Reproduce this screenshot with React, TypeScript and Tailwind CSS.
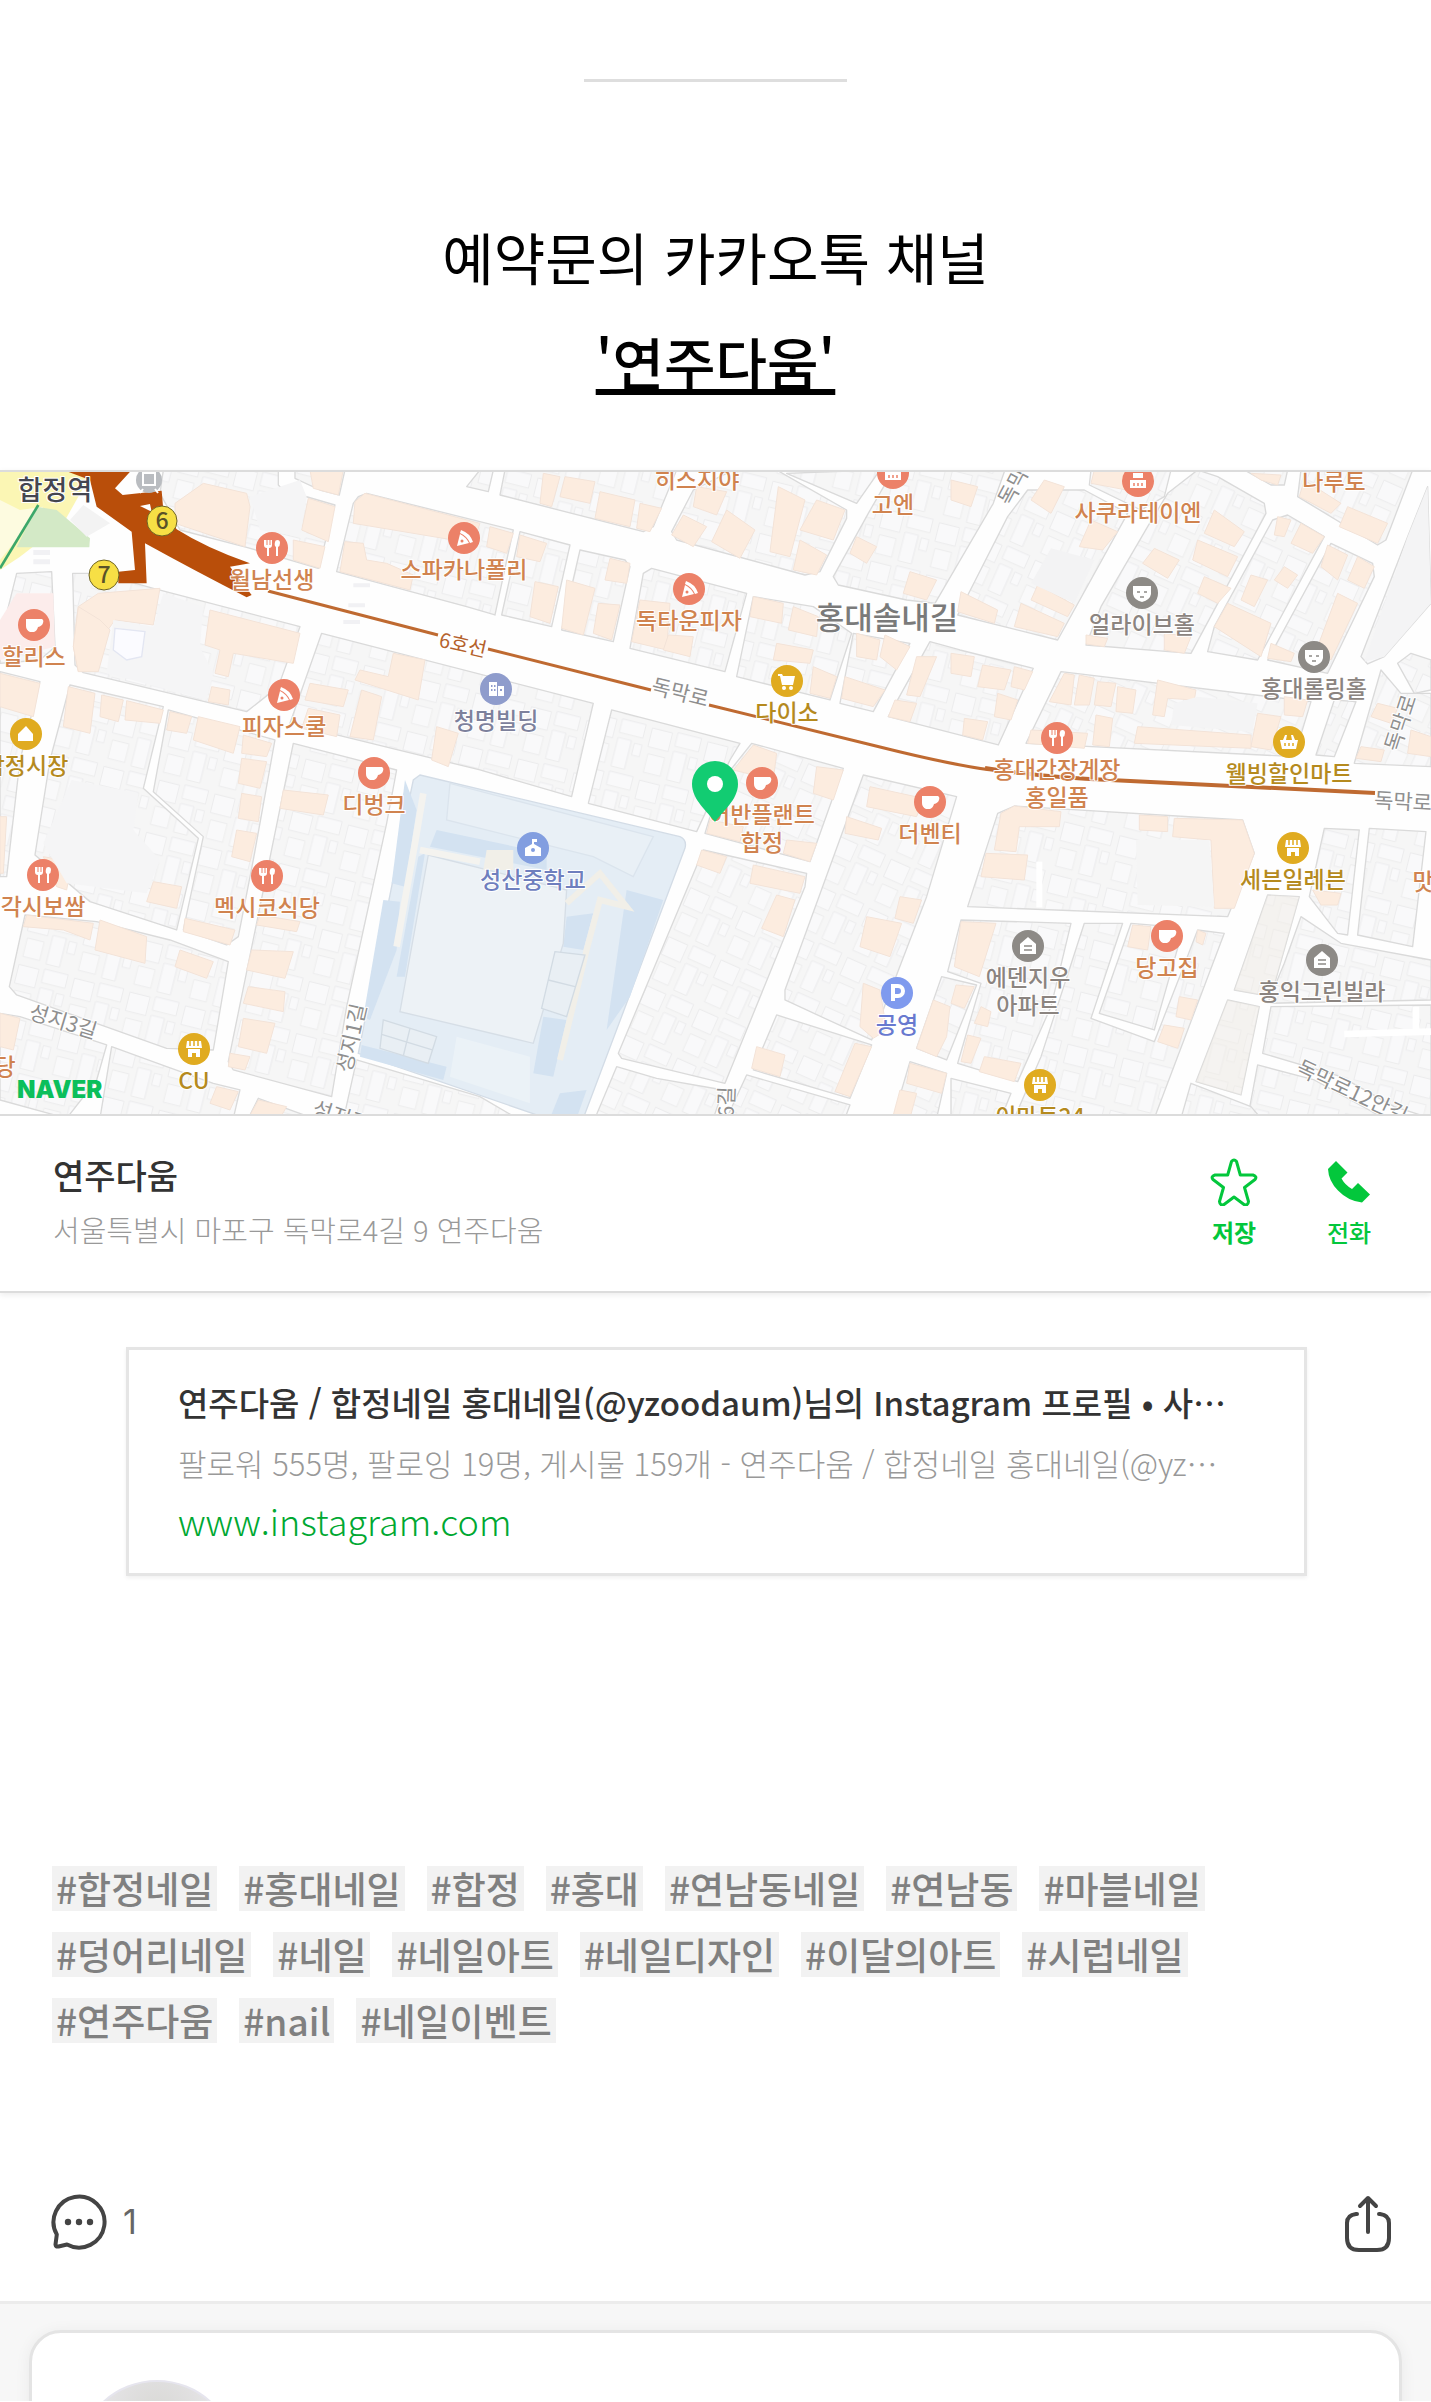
import React from 'react';

type IconKind =
  | 'fork' | 'pizza' | 'cup' | 'building' | 'cart' | 'face'
  | 'basket' | 'store' | 'school' | 'parking' | 'home' | 'tent' | 'bowl';

type Place = {
  x: number;
  y: number;
  lines: string[];
  color: string;
  icon?: IconKind;
  pin?: string;
};

const FOOD = '#d0834f';
const FOOD_PIN = '#ec8168';
const SHOP = '#b58a1e';
const SHOP_PIN = '#e0ab20';
const GRAY = '#8b8480';
const GRAY_PIN = '#8d8a86';

/* x / y is the centre of the round marker; the name sits below it. */
const PLACES: Place[] = [
  { x: 272, y: 548, lines: ['월남선생'], color: FOOD, icon: 'fork', pin: FOOD_PIN },
  { x: 464, y: 538, lines: ['스파카나폴리'], color: FOOD, icon: 'pizza', pin: FOOD_PIN },
  { x: 34, y: 625, lines: ['할리스'], color: FOOD, icon: 'cup', pin: FOOD_PIN },
  { x: 26, y: 734, lines: ['합정시장'], color: SHOP, icon: 'tent', pin: SHOP_PIN },
  { x: 284, y: 695, lines: ['피자스쿨'], color: FOOD, icon: 'pizza', pin: FOOD_PIN },
  { x: 496, y: 689, lines: ['청명빌딩'], color: '#7d819c', icon: 'building', pin: '#8f9ccc' },
  { x: 374, y: 773, lines: ['디벙크'], color: FOOD, icon: 'cup', pin: FOOD_PIN },
  { x: 689, y: 589, lines: ['독타운피자'], color: FOOD, icon: 'pizza', pin: FOOD_PIN },
  { x: 787, y: 681, lines: ['다이소'], color: SHOP, icon: 'cart', pin: SHOP_PIN },
  { x: 697, y: 448, lines: ['히스지야'], color: FOOD },
  { x: 893, y: 473, lines: ['고엔'], color: FOOD, icon: 'bowl', pin: FOOD_PIN },
  { x: 1138, y: 481, lines: ['사쿠라테이엔'], color: FOOD, icon: 'bowl', pin: FOOD_PIN },
  { x: 1334, y: 450, lines: ['나루토'], color: FOOD },
  { x: 1142, y: 593, lines: ['얼라이브홀'], color: GRAY, icon: 'face', pin: GRAY_PIN },
  { x: 1314, y: 657, lines: ['홍대롤링홀'], color: GRAY, icon: 'face', pin: GRAY_PIN },
  { x: 1057, y: 738, lines: ['홍대간장게장', '홍일품'], color: FOOD, icon: 'fork', pin: FOOD_PIN },
  { x: 1289, y: 742, lines: ['웰빙할인마트'], color: SHOP, icon: 'basket', pin: SHOP_PIN },
  { x: 762, y: 783, lines: ['어반플랜트', '합정'], color: FOOD, icon: 'cup', pin: FOOD_PIN },
  { x: 930, y: 802, lines: ['더벤티'], color: FOOD, icon: 'cup', pin: FOOD_PIN },
  { x: 1293, y: 848, lines: ['세븐일레븐'], color: SHOP, icon: 'store', pin: SHOP_PIN },
  { x: 533, y: 848, lines: ['성산중학교'], color: '#6f7fbe', icon: 'school', pin: '#829ee0' },
  { x: 43, y: 875, lines: ['각시보쌈'], color: FOOD, icon: 'fork', pin: FOOD_PIN },
  { x: 267, y: 876, lines: ['멕시코식당'], color: FOOD, icon: 'fork', pin: FOOD_PIN },
  { x: 897, y: 993, lines: ['공영'], color: '#6879cf', icon: 'parking', pin: '#7f9aee' },
  { x: 1167, y: 936, lines: ['당고집'], color: FOOD, icon: 'cup', pin: FOOD_PIN },
  { x: 1028, y: 946, lines: ['에덴지우', '아파트'], color: GRAY, icon: 'home', pin: GRAY_PIN },
  { x: 1322, y: 960, lines: ['홍익그린빌라'], color: GRAY, icon: 'home', pin: GRAY_PIN },
  { x: 194, y: 1049, lines: ['CU'], color: SHOP, icon: 'store', pin: SHOP_PIN },
  { x: 1040, y: 1085, lines: ['이마트24'], color: SHOP, icon: 'store', pin: SHOP_PIN },
  { x: 1423, y: 850, lines: ['맛'], color: FOOD },
  { x: 5, y: 1035, lines: ['당'], color: FOOD },
];

const ROAD_LABELS = [
  { x: 680, y: 693, r: 14, t: '독막로' },
  { x: 1401, y: 723, r: -72, t: '독막로' },
  { x: 1403, y: 802, r: 3, t: '독막로' },
  { x: 63, y: 1022, r: 17, t: '성지3길' },
  { x: 352, y: 1038, r: -77, t: '성지1길' },
  { x: 341, y: 1117, r: 18, t: '성지길' },
  { x: 727, y: 1102, r: -88, t: '6길' },
  { x: 1352, y: 1092, r: 25, t: '독막로12안길' },
  { x: 1018, y: 478, r: -62, t: '독막로' },
];

type Sheet = { ox: number; oy: number; blocks: string[]; peach: string[] };

/* City blocks and shop buildings, drawn tile by tile at three times map scale. */
const SHEETS: Sheet[] = [
  {
    ox: 0, oy: 460,
    blocks: [
      '480,100 490,30 835,30 835,75 850,90 1005,135 955,325 740,262 540,210',
      '885,30 1035,30 1018,105 960,90 885,55',
      '1060,130 1075,110 1100,100 1540,210 1485,465 1400,440 1010,335',
      '50,340 155,335 165,560 120,600 0,610 0,540',
      '218,340 300,340 460,385 900,500 835,680 740,755 250,638 225,615',
      '965,520 1780,730 1715,1010 1440,930 870,790',
      '0,635 120,665 60,900 20,1250 0,1250',
      '210,675 490,740 430,985 595,1135 530,1410 270,1325 105,1185 150,900',
      '505,750 825,840 760,1200 715,1430 680,1455 550,1410 610,1130 460,995',
    ],
    peach: [
      '525,130 610,70 740,100 750,140 735,260 525,190',
      '925,115 1005,140 985,245 905,210', '880,240 975,260 960,325 880,300',
      '930,30 1030,30 1015,105 940,85',
      '1065,125 1095,100 1440,190 1420,250 1060,190', '1035,245 1090,250 1100,300 1160,310 1240,345 1230,390 1020,335',
      '295,400 480,385 460,495 345,480 235,635 220,560 235,440', '235,440 300,480 330,510 295,635 235,635 220,560',
      '630,450 900,520 880,610 700,580 685,650 645,640 660,570 615,555', '635,680 690,690 685,735 625,725',
      '1180,580 1275,600 1255,720 1065,660 1080,630 1165,650', '1085,690 1145,710 1120,840 1050,830',
      '930,670 1045,690 1030,740 915,720', '925,745 1020,765 1010,830 905,805', '1310,800 1375,820 1345,920 1295,900',
      '0,640 120,670 100,770 0,740',
      '205,680 285,700 270,820 190,800', '305,705 370,720 355,785 300,770', '380,722 490,750 480,790 375,780',
      '510,755 575,770 560,820 500,810', '595,770 720,800 700,880 580,840', '730,825 815,850 800,890 725,880', '725,895 800,905 780,985 715,970',
    ],
  },
  {
    ox: 480, oy: 460,
    blocks: [
      '75,30 590,30 520,200 490,215 60,105',
      '0,30 40,30 25,95 -40,80',
      '640,90 760,30 890,30 1100,150 1100,175 1020,335 975,345 590,240 575,215',
      '1165,160 1240,30 1575,30 1540,130 1365,430 1280,420 1075,375 1060,350',
      '920,40 1200,30 1130,130',
      '515,325 800,400 735,635 450,565 490,340',
      '120,215 270,255 215,500 65,465',
      '300,270 435,300 450,320 400,545 245,510',
      '820,410 1000,440 1115,520 1050,720 770,650',
      '1120,520 1290,550 1180,755 1080,730',
      '1350,545 1440,570 1660,625 1555,855 1225,770',
      '395,750 780,850 750,900 650,1115 325,1030',
    ],
    peach: [
      '190,40 240,50 215,140 180,130', '255,50 345,65 330,130 240,110', '360,95 465,120 450,200 345,175', '480,130 545,145 510,215 470,205',
      '650,80 740,95 710,165 640,140', '610,165 680,200 640,260 575,225', '740,150 825,210 780,295 695,245',
      '895,80 975,120 930,290 870,275', '1010,120 1095,150 1060,240 960,210', '960,240 1040,285 1010,345 940,330',
      '1130,230 1190,260 1160,310 1110,280', '1290,335 1370,360 1340,420 1270,400', '30,200 100,220 80,280 20,260',
      '120,225 200,250 180,305 110,290', '165,365 235,380 210,490 150,470', '390,295 450,310 440,370 375,360', '260,360 345,385 310,525 245,505', '355,430 420,435 395,540 340,520',
      '480,420 570,430 560,570 455,545', '565,525 640,530 630,590 550,570', '820,410 910,430 905,490 810,470',
      '940,440 1015,470 1010,530 925,510', '890,550 1000,570 990,610 880,600', '1000,620 1070,650 1050,715 990,700',
      '1130,520 1200,540 1190,600 1130,590', '1215,525 1290,560 1250,630 1200,590', '1095,650 1215,690 1180,740 1085,715',
      '1310,590 1370,590 1320,710 1280,705', '1245,720 1310,730 1290,785 1225,770',
    ],
  },
  {
    ox: 951, oy: 460,
    blocks: [
      '230,90 400,90 530,160 320,540 20,465 170,170',
      '420,30 660,30 640,110 570,150 415,75',
      '590,200 650,100 740,30 800,50 940,130 945,160 720,580 405,555 450,440',
      '965,180 1010,165 1120,230 920,600 770,575 790,500',
      '1140,250 1265,310 1270,350 1130,640 950,600',
      '880,30 1010,30 1000,75 960,75',
      '1050,30 1385,30 1305,240 1280,255 1040,110',
      '1430,80 1440,430 1300,590 1250,612 1230,590 1370,230',
      '330,635 1080,725 1030,890 225,850',
      '1150,720 1215,725 1150,890 1095,885',
      '1290,630 1350,700 1440,700 1440,920 1210,910',
      '1340,610 1380,580 1440,600 1440,690 1390,700',
    ],
    peach: [
      '0,60 80,80 60,140 0,120', '280,60 340,80 300,160 240,120', '420,180 500,215 455,270 385,260', '260,375 370,435 350,470 240,420',
      '30,395 140,450 130,490 20,455', '210,430 340,490 320,530 190,500', '430,30 600,30 580,100 420,70',
      '790,150 880,215 850,260 760,220', '610,265 685,300 650,355 575,310', '740,240 860,290 830,350 725,300', '760,350 840,385 800,430 740,400',
      '980,170 1020,180 1000,230 970,225', '1050,190 1120,230 1085,280 1020,250', '1000,320 1040,345 1010,385 970,360',
      '900,345 950,360 910,440 870,420', '830,430 960,490 930,590 790,500', '1130,255 1190,285 1160,360 1110,320', '1220,290 1270,320 1240,385 1190,360',
      '1160,400 1220,430 1140,600 1100,560', '960,550 1030,580 1020,605 950,595', '1060,60 1170,130 1140,160 1045,110', '1190,140 1310,190 1280,250 1165,200',
      '0,580 70,590 60,650 0,640', '95,615 180,630 160,690 80,680', '190,620 245,635 220,690 180,680', '140,700 200,720 180,780 130,770',
      '340,640 370,645 360,735 295,725', '385,645 430,655 415,735 370,735', '440,665 495,670 480,740 430,735', '500,680 555,690 545,760 495,755',
      '620,660 735,690 730,720 650,715 640,770 605,765', '560,800 900,825 900,865 550,850', '920,760 990,770 960,870 900,860', '1000,710 1070,720 1055,770 1000,765',
      '240,810 410,820 400,865 230,850', '435,765 485,775 475,860 425,855', '1280,730 1340,745 1320,790 1260,770', '1230,860 1300,870 1290,905 1215,895', '1380,810 1440,830 1440,890 1370,880',
      '40,775 110,785 95,840 35,825', '405,525 470,535 460,560 405,552', '640,520 720,530 700,580 640,570', '900,40 990,45 980,75 930,60',
    ],
  },
  {
    ox: 0, oy: 790,
    blocks: [
      '880,-140 1190,-60 1160,100 1040,650 995,920 700,840 685,815',
      '75,375 290,395 510,450 685,515 640,780 500,775 50,615 28,590',
      '0,670 60,680 320,765 290,870 200,985 0,930',
      '335,770 500,830 640,880 720,900 700,985 300,985',
      '775,925 940,985 745,985',
      '1070,810 1440,920 1560,990 1030,990',
    ],
    peach: [
      '850,0 985,15 970,75 840,55', '725,10 785,20 775,95 715,85', '710,120 770,130 750,215 695,200', '460,275 545,290 530,355 440,335',
      '555,385 705,420 690,465 550,425', '300,390 440,440 435,520 285,480', '540,480 640,515 620,565 525,530', '80,375 280,400 270,450 190,420 70,410',
      '780,375 900,395 890,425 770,405', '755,480 880,485 855,565 740,540', '745,590 855,605 850,665 730,640', '730,685 825,700 800,790 715,770',
      '690,790 750,800 735,840 685,830', '0,670 60,685 40,780 0,770', '650,890 715,905 690,960 630,940', '775,930 860,950 840,985 745,985', '130,200 215,215 200,300 170,290', '0,80 20,80 10,250 0,250',
    ],
  },
  {
    ox: 480, oy: 790,
    blocks: [
      '670,180 980,250 975,290 735,880 425,805 415,790',
      '410,830 530,865 730,900 700,985 345,985',
      '1150,-45 1430,20 1340,320 1175,750 915,630 915,600',
      '890,675 1175,765 1110,925 820,840',
      '800,855 1110,945 1095,985 740,985',
      '815,-140 1090,-65 990,215 675,130 720,-20',
      '1385,560 1490,585 1400,810 1310,775',
      '1290,815 1400,850 1370,985 1240,985',
    ],
    peach: [
      '665,180 740,200 720,250 650,225', '820,225 975,260 960,310 810,280', '890,315 945,330 910,440 845,415', '830,770 915,795 900,860 815,835',
      '1100,80 1205,115 1195,150 1095,130', '1160,380 1265,400 1230,500 1140,470', '1260,320 1325,330 1300,400 1245,385',
      '1150,580 1200,600 1220,720 1180,745 1140,710', '1125,760 1175,770 1110,920 1065,905', '1360,630 1410,650 1400,740 1370,800 1310,775',
      '820,-135 890,-110 880,-30 760,-60', '1010,-70 1090,-60 1060,30 1000,10', '920,150 1010,160 990,215 910,190', '1170,-10 1330,25 1310,80 1160,50',
      '1290,820 1400,850 1385,910 1280,880', '1260,900 1310,910 1290,985 1240,975', '690,90 790,110 780,155 680,130',
    ],
  },
  {
    ox: 951, oy: 790,
    blocks: [
      '30,390 360,400 300,650 200,875 20,820 90,580 -10,545',
      '190,48 875,90 910,190 830,380 50,350 140,70',
      '400,400 515,400 420,685 610,755 690,550 740,420 820,430 610,985 190,985 270,800',
      '540,400 660,410 690,440 610,720 445,670',
      '950,315 1045,320 960,620 850,600',
      '830,630 925,650 870,915 735,875',
      '1120,115 1225,120 1190,435 1160,430 1075,320',
      '1255,115 1425,125 1385,470 1220,435',
      '1050,380 1170,460 1440,510 1440,630 950,640 1000,520',
      '960,650 1440,645 1440,985 1330,950 1170,860 935,790',
      '920,825 1090,870 1300,985 890,985',
      '720,880 900,950 930,985 690,985',
      '0,865 180,910 150,985 0,985',
    ],
    peach: [
      '190,48 330,65 325,110 205,110 195,185 130,180 150,70', '105,190 230,195 220,270 90,260', '565,75 650,80 650,125 565,120',
      '670,85 875,90 910,190 850,355 790,355 780,150 665,140', '30,395 135,400 85,560 10,530', '15,585 70,590 40,655 0,640', '90,650 120,665 110,710 70,700',
      '50,735 90,745 60,820 30,815', '100,800 210,820 190,875 85,845', '685,620 740,630 720,690 675,680', '640,705 700,715 680,775 620,755',
      '740,420 765,430 755,465 735,455', '1085,300 1170,310 1160,345 1110,345', '545,405 600,410 590,480 530,470',
    ],
  },
];

function Glyph({ kind }: { kind: IconKind }) {
  switch (kind) {
    case 'fork':
      return (
        <g fill="#fff">
          <path d="M-8-8v5q0 3 3 3v8h2v-8q3 0 3-3v-5h-1.500v5h-1v-5h-2v5h-1v-5z" />
          <path d="M3-6q0-2 2.500-2t2.500 3q0 3-2 4v9h-2v-9q-2-1-1-5z" />
        </g>
      );
    case 'pizza':
      return (
        <g fill="#fff">
          <path d="M-3-8Q6-5 9 4l-3 1Q3-2-4-5z" />
          <path d="M-4-4Q2-1 5 5L-7 8z" />
          <circle cx="-2" cy="3" r="1.500" fill={FOOD_PIN} />
        </g>
      );
    case 'cup':
      return <path d="M-8-6H8q2 1 1 4t-5 4q-1 4-4 5h-4q-4-2-4-6z" fill="#fff" />;
    case 'tent':
      return <path d="M0-8 7 0v7H-8V0z" fill="#fff" />;
    case 'building':
      return (
        <g fill="#fff">
          <path d="M-7-7h8v14h-8z" />
          <path d="M2-3h6V7H2z" />
          <path d="M-5-4h1.500v2H-5zm3 0h1.500v2H-2zM-5 0h1.500v2H-5zm3 0h1.500v2H-2zM4 0h2v2H4z" fill="#8f9ccc" />
        </g>
      );
    case 'cart':
      return (
        <g fill="#fff">
          <path d="M-9-7h4l1 2H8L6 4H-5L-7-5h-2z" />
          <circle cx="-3" cy="7" r="2" />
          <circle cx="4" cy="7" r="2" />
        </g>
      );
    case 'face':
      return (
        <g>
          <path d="M-9-7H9V1Q8 7 0 9-8 7-9 1z" fill="#fff" />
          <path d="M-5-1h3M2-1h3M-2 4h4" stroke={GRAY_PIN} strokeWidth="1.500" />
        </g>
      );
    case 'basket':
      return (
        <g>
          <path d="M-9-2h3l2-5h2l-1 5h6L2-7h2l2 5h3L7 7H-7z" fill="#fff" />
          <path d="M-4 1v3M0 1v3M4 1v3" stroke={SHOP_PIN} strokeWidth="1.500" />
        </g>
      );
    case 'bowl':
      return (
        <g>
          <path d="M-8-1H8v8H-8zM-5-8H5v5H-5z" fill="#fff" />
          <path d="M-4 2v3M0 2v3M4 2v3" stroke={FOOD_PIN} strokeWidth="1.500" />
        </g>
      );
    case 'store':
      return (
        <g>
          <path d="M-7-8H7l1 7H-8zM-6 0H6v8H2V4h-4v4h-4z" fill="#fff" />
          <path d="M-4-8v5M0-8v5M4-8v5" stroke={SHOP_PIN} strokeWidth="1.500" />
        </g>
      );
    case 'school':
      return (
        <g>
          <path d="M-1-9H4v3H1v2l7 4v8H-8V0l7-4z" fill="#fff" />
          <circle cx="0" cy="2" r="2" fill="#829ee0" />
        </g>
      );
    case 'parking':
      return <path d="M-4 8V-7h5a5 5 0 0 1 0 10h-4" fill="none" stroke="#fff" strokeWidth="4" />;
    case 'home':
      return (
        <g>
          <path d="M0-9 8-2V8H-8V-2z" fill="#fff" />
          <path d="M-4 0h8M-4 4h8" stroke={GRAY_PIN} strokeWidth="1.500" />
        </g>
      );
  }
}

function StationExit({ x, y, n }: { x: number; y: number; n: string }) {
  return (
    <g>
      <circle cx={x} cy={y} r="15" fill="#f7df45" stroke="#6e6426" strokeWidth="1" />
      <text x={x} y={y + 8} textAnchor="middle" fontSize="23" fontWeight="500" fill="#5a5228">{n}</text>
    </g>
  );
}

const LOTS = 'M4 4h24v22H4zM34 2h28v16H34zM34 24h16v34H34zM6 34h20v22H6zM54 26h9v14h-9z';

function NeighborhoodMap() {
  return (
    <svg
      viewBox="0 472 1431 642"
      preserveAspectRatio="xMidYMid slice"
      className="block h-[642px] w-full"
      role="img"
      aria-label="연주다움 위치 지도"
    >
      <defs>
        <pattern id="lots" width="66" height="62" patternUnits="userSpaceOnUse" patternTransform="rotate(14) scale(2.6)">
          <rect width="66" height="62" fill="#f6f6f6" />
          <path d={LOTS} fill="#f9f9fa" stroke="#eaeaeb" strokeWidth="1" />
        </pattern>
        <pattern id="lots-steep" width="66" height="62" patternUnits="userSpaceOnUse" patternTransform="rotate(24) scale(2.6)">
          <rect width="66" height="62" fill="#f6f6f6" />
          <path d={LOTS} fill="#f9f9fa" stroke="#eaeaeb" strokeWidth="1" />
        </pattern>
      </defs>
      <rect y="472" width="1431" height="642" fill="#fefefe" />

      {/* station plaza */}
      <g transform="translate(0 460) scale(.3333)">
        <path d="M0 30H280L190 190 60 290 0 330Z" fill="#fbf6b4" />
        <path d="M0 120 60 150 130 140 0 300Z" fill="#fdfbe0" />
        <path d="M110 140 170 150 270 235 268 262H50Z" fill="#d3e9c6" />
        <path d="M210 180 250 135 330 190 260 230Z" fill="#f3f3f3" />
        <path d="M115 135 0 325" stroke="#3ca76a" strokeWidth="8" />
        <path d="M100 270h50v15h-50zM100 298h50v15h-50zM1060 370h50v12h-50zM1045 430h50v12h-50zM1030 480h50v12h-50z" fill="#f1f1f4" />
      </g>

      {SHEETS.map((s, i) => (
        <g key={i} transform={`translate(${s.ox} ${s.oy}) scale(.3333)`}>
          {s.blocks.map((p) => (
            <polygon
              key={p}
              points={p}
              fill={i === 2 || i === 4 ? 'url(#lots-steep)' : 'url(#lots)'}
              stroke="#dadada"
              strokeWidth="4"
              strokeLinejoin="round"
            />
          ))}
          {s.peach.map((p) => (
            <polygon key={p} points={p} fill="#fcecdf" stroke="#f3e3d8" strokeWidth="3" />
          ))}
        </g>
      ))}

      {/* open lots */}
      <g transform="translate(0 460) scale(.3333)" fill="#f5f5f6">
        <path d="M750 110 900 60 920 110 900 230 780 210Z" />
        <path d="M490 400 610 440 600 560 640 640 620 720 320 640 340 480 460 500Z" />
        <path d="M345 505 435 515 425 590 380 600 340 570Z" fill="#fbfbff" stroke="#e3e6f2" strokeWidth="4" />
        <path d="M0 480 50 400 160 400 165 560 0 600Z" fill="#fceceb" />
        <path d="M215 960 415 1000 400 1110 480 1200 440 1300 200 1270 130 1150Z" />
      </g>
      <g transform="translate(951 790) scale(.3333)">
        <path d="M555 150H775L790 350 560 345Z" fill="#f5f5f5" />
        <path d="M265 215V352" stroke="#fff" strokeWidth="18" />
        <path d="M1180 732 1440 725M1395 650v80" stroke="#fff" strokeWidth="20" />
        <path d="M950 315 1045 320 960 620 850 600ZM830 630 925 650 870 915 735 875Z" fill="#f1ede8" fillOpacity=".5" />
      </g>
      <g transform="translate(951 460) scale(.3333)">
        <path d="M300 265 430 300 370 430 240 370Z" fill="#f3f3f4" />
        <path d="M740 710 920 730 905 815 660 795 670 730Z" fill="#f4f4f5" />
        <path d="M1370 230 1430 80 1440 430 1300 590 1240 605Z" fill="#f4f4f5" />
      </g>

      {/* school grounds */}
      <g transform="translate(0 790) scale(.3333)">
        <path d="M1260-45 2040 140Q2062 150 2055 175L1750 985H1640L1075 790 1215 90 1240-30Z" fill="#e4edf5" stroke="#d3dce6" strokeWidth="4" />
        <g fill="#d3e2f1">
          <path d="M1215-30 1250 60 1215 290 1175 280Z" />
          <path d="M1150 330 1200 335 1190 480 1110 690 1090 680Z" />
          <path d="M1310 120 1640 190 1640 240 1290 170Z" />
          <path d="M1275 190 1255 200 1190 560 1215 560Z" />
          <path d="M1880 300 1990 330 1890 620 1820 720Z" />
          <path d="M1630 680 1700 690 1660 860 1600 850Z" />
          <path d="M1085 765 1340 830 1330 870 1080 800Z" />
          <path d="M1680 910 1760 900 1730 985H1650Z" />
          <path d="M1700 380 1780 370 1750 480 1690 470Z" />
        </g>
        <path d="M1285 195 1700 300 1690 460 1600 760 1200 665Z" fill="#edf2f6" stroke="#d6dee6" strokeWidth="4" />
        <path d="M1370 740 1590 800 1590 940 1350 860Z" fill="#ebf2f7" />
        <path d="M1350-20 1960 140 1900 260 1780 200 1340 90Z" fill="#e9f0f6" stroke="#dbe4ed" strokeWidth="4" />
        <path d="M1270 10 1245 160 1190 470M1260 180 1440 215" fill="none" stroke="#f4f3ef" strokeWidth="20" />
        <path d="M1700 340 1800 250 1880 350 1800 330 1760 480 1680 810" fill="none" stroke="#f1efe8" strokeWidth="18" />
        <path d="M1665 485 1755 495 1700 680 1625 655ZM1645 570 1725 590M1150 690 1310 740 1285 820 1140 775ZM1230 715 1210 798M1145 733 1297 780" fill="#e9eff4" stroke="#d2dbe3" strokeWidth="4" />
        <path d="M1460 180h80v60h-90z" fill="#f1efe8" />
      </g>

      {/* subway line 6 and its station concourse */}
      <g fill="none" stroke="#bf6a31" strokeWidth="3">
        <path d="M268 591 438 635M488 649 651 690" />
        <path d="M709 705 880 747Q960 767 1000 771" />
        <path d="M985 768Q1040 777 1110 780L1375 793" strokeWidth="4" />
      </g>
      <path
        transform="translate(0 460) scale(.3333)"
        d="M190 30H395L345 85 368 105 485 92 490 150 530 208Q620 265 750 310L690 320 755 405 740 412Q580 330 435 250L440 370H355V335L405 330 395 215 290 140 270 60ZM420 138 455 155 450 132Z"
        fill="#b94e0a"
        fillRule="evenodd"
      />
      <circle cx="149" cy="480" r="13" fill="#b9bcc0" />
      <path d="M143 473h12v12h-12zM143 489l-3 4M155 489l3 4" stroke="#fff" strokeWidth="2" fill="none" />

      <g fontFamily="'Noto Sans CJK KR', sans-serif" stroke="#fff" strokeWidth="2" strokeLinejoin="round" style={{ paintOrder: 'stroke' }}>
        {ROAD_LABELS.map((l, i) => (
          <text key={i} transform={`translate(${l.x} ${l.y}) rotate(${l.r})`} y="7" textAnchor="middle" fontSize="21" fill="#8f8f8f">
            {l.t}
          </text>
        ))}
        <text transform="translate(463 645) rotate(13)" y="7" textAnchor="middle" fontSize="20" fill="#b5622c">6호선</text>
        <text x="887" y="629" textAnchor="middle" fontSize="31" fontWeight="500" fill="#7a7a7a">홍대솔내길</text>
        <text x="55" y="500" textAnchor="middle" fontSize="27" fontWeight="500" fill="#44464f">합정역</text>
        {PLACES.map((p, i) => (
          <g key={i}>
            {p.lines.map((line, n) => (
              <text key={line} x={p.x} y={p.y + 40 + n * 28} textAnchor="middle" fontSize="23" fontWeight="500" fill={p.color}>
                {line}
              </text>
            ))}
          </g>
        ))}
      </g>
      {PLACES.map(
        (p, i) =>
          p.icon && (
            <g key={i} transform={`translate(${p.x} ${p.y})`}>
              <circle r="16" fill={p.pin} />
              <Glyph kind={p.icon} />
            </g>
          ),
      )}
      <g fontFamily="'Noto Sans CJK KR', sans-serif">
        <StationExit x={162} y={521} n="6" />
        <StationExit x={104} y={575} n="7" />
      </g>
      <text x="17" y="1098" fontFamily="Inter, sans-serif" fontSize="24" fontWeight="900" fill="#0bbf5b">NAVER</text>

      {/* current place */}
      <path d="M715 822C708 812 692 800 692 784A23 23 0 1 1 738 784C738 800 722 812 715 822Z" fill="#12cc72" />
      <circle cx="715" cy="784" r="8" fill="#fff" />
    </svg>
  );
}

function StarIcon() {
  return (
    <svg viewBox="0 0 48 48" className="size-12" fill="none" stroke="currentColor" strokeWidth="3" strokeLinejoin="round" aria-hidden="true">
      <path d="M21.500 3.500Q24 .500 26.500 3.500L30.300 17H43Q47.500 18.500 45 21.500L34.500 29.500 38.500 43.500Q38 48 34 46.500L24 39 14 46.500Q10 48 9.500 43.500L13.500 29.500 3 21.500Q.500 18.500 5 17H17.700Z" />
    </svg>
  );
}

function PhoneIcon() {
  return (
    <svg viewBox="0 0 48 48" className="size-12" fill="currentColor" aria-hidden="true">
      <path d="M11 3 22.500 14.500 16.500 20.500Q20 27 27 31L33 25 45 36.500 37 44.500Q23 43 13 32.500 3.500 23 3 11Z" />
    </svg>
  );
}

function CommentIcon() {
  return (
    <svg viewBox="0 0 56 56" className="size-14" fill="none" stroke="#444" strokeWidth="4" strokeLinejoin="round" aria-hidden="true">
      <path d="M5.800 40.500A25.500 25.500 0 1 1 16 50.500L7.500 52.500Q5 53 4.500 50.500Z" />
      <g fill="#444" stroke="none">
        <circle cx="17" cy="28" r="3.200" />
        <circle cx="28" cy="28" r="3.200" />
        <circle cx="39" cy="28" r="3.200" />
      </g>
    </svg>
  );
}

function ShareIcon() {
  return (
    <svg viewBox="0 0 48 58" className="h-[58px] w-12" fill="none" stroke="#444" strokeWidth="4" strokeLinecap="round" strokeLinejoin="round" aria-hidden="true">
      <path d="M13 19H12Q3 20 3 28V43Q3 55 15 55H33Q45 55 45 43V28Q45 20 36 19H35M24 3V37M16 11 24 3 32 11" />
    </svg>
  );
}

const TAGS = [
  '합정네일', '홍대네일', '합정', '홍대', '연남동네일', '연남동', '마블네일',
  '덩어리네일', '네일', '네일아트', '네일디자인', '이달의아트', '시럽네일',
  '연주다움', 'nail', '네일이벤트',
];

export default function App() {
  return (
    <main lang="ko" className="overflow-hidden bg-white font-['Noto_Sans_CJK_KR',sans-serif] text-black">
      <hr className="mx-auto mt-[79px] w-[263px] border-0 border-t-[3px] border-[#dedede]" />

      <section className="mt-[121px] text-center text-[56px] leading-[105px] font-normal">
        <p>예약문의 카카오톡 채널</p>
        <p className="font-medium">
          <a href="#kakao" className="underline decoration-[6px] underline-offset-[4px] [text-decoration-skip-ink:none]">'연주다움'</a>
        </p>
      </section>

      <section className="mt-[57px] border-b-2 border-[#dcdcdc] shadow-[0_2px_6px_rgba(0,0,0,0.08)]">
        <div className="border-y-2 border-[#dcdcdc]">
          <NeighborhoodMap />
        </div>
        <div className="flex h-[175px] items-center justify-between pr-[58px] pl-[53px]">
          <div className="pb-1">
            <h2 className="text-[34px] leading-[48px] font-medium text-[#333]">연주다움</h2>
            <p className="mt-1.5 text-[29px] leading-[48px] font-light text-[#999]">서울특별시 마포구 독막로4길 9 연주다움</p>
          </div>
          <div className="flex gap-[67px] text-[24px] leading-[34px] text-[#03c73c]">
            <button type="button" className="flex flex-col items-center gap-[9px] font-bold">
              <StarIcon />
              저장
            </button>
            <button type="button" className="flex flex-col items-center gap-[9px] font-medium">
              <PhoneIcon />
              전화
            </button>
          </div>
        </div>
      </section>

      <a
        href="#instagram"
        className="mr-[124px] ml-[126px] mt-[54px] block overflow-hidden border-[3px] border-[#e5e5e5] px-[49px] pt-[27px] pb-7 whitespace-nowrap shadow-[0_2px_4px_rgba(0,0,0,0.06)]"
      >
        <strong className="block text-[33px] leading-[50px] font-medium text-[#333]">
          연주다움 / 합정네일 홍대네일(@yzoodaum)님의 Instagram 프로필 • 사…
        </strong>
        <span className="mt-[11px] block text-[31px] leading-[50px] font-light text-[#999]">
          팔로워 555명, 팔로잉 19명, 게시물 159개 - 연주다움 / 합정네일 홍대네일(@yz…
        </span>
        <span className="mt-[7px] block text-[36px] leading-[50px] font-light text-[#00a832]">www.instagram.com</span>
      </a>

      <nav aria-label="태그" className="mt-[290px] flex flex-wrap gap-x-[22px] gap-y-[21px] pr-20 pl-[52px]">
        {TAGS.map((tag) => (
          <a key={tag} href={`#${tag}`} className="bg-[#f2f2f2] px-1 text-[37px] leading-[45px] text-[#808080] font-medium">
            #{tag}
          </a>
        ))}
      </nav>

      <div className="mt-[151px] flex h-[107px] items-start justify-between pr-[39px] pl-[51px]">
        <button type="button" aria-label="댓글 1" className="flex items-center gap-4 font-['Inter',sans-serif] text-[34px] leading-[56px] text-[#666]">
          <CommentIcon />1
        </button>
        <button type="button" aria-label="공유" className="mt-px">
          <ShareIcon />
        </button>
      </div>

      <section className="h-[100px] overflow-hidden border-t-[3px] border-[#ececec] bg-[#f7f7f7] px-[29px] pt-[26px]">
        <div className="h-40 rounded-[32px] border-[3px] border-[#e4e4e4] bg-white pt-[47px] pl-[45px] shadow-[0_2px_16px_rgba(0,0,0,0.06)]">
          <div className="size-40 rounded-full border-2 border-[#e6e5ee] bg-radial-[at_50%_30%] from-[#d6d6d2] to-[#f3f1f9]" />
        </div>
      </section>
    </main>
  );
}
